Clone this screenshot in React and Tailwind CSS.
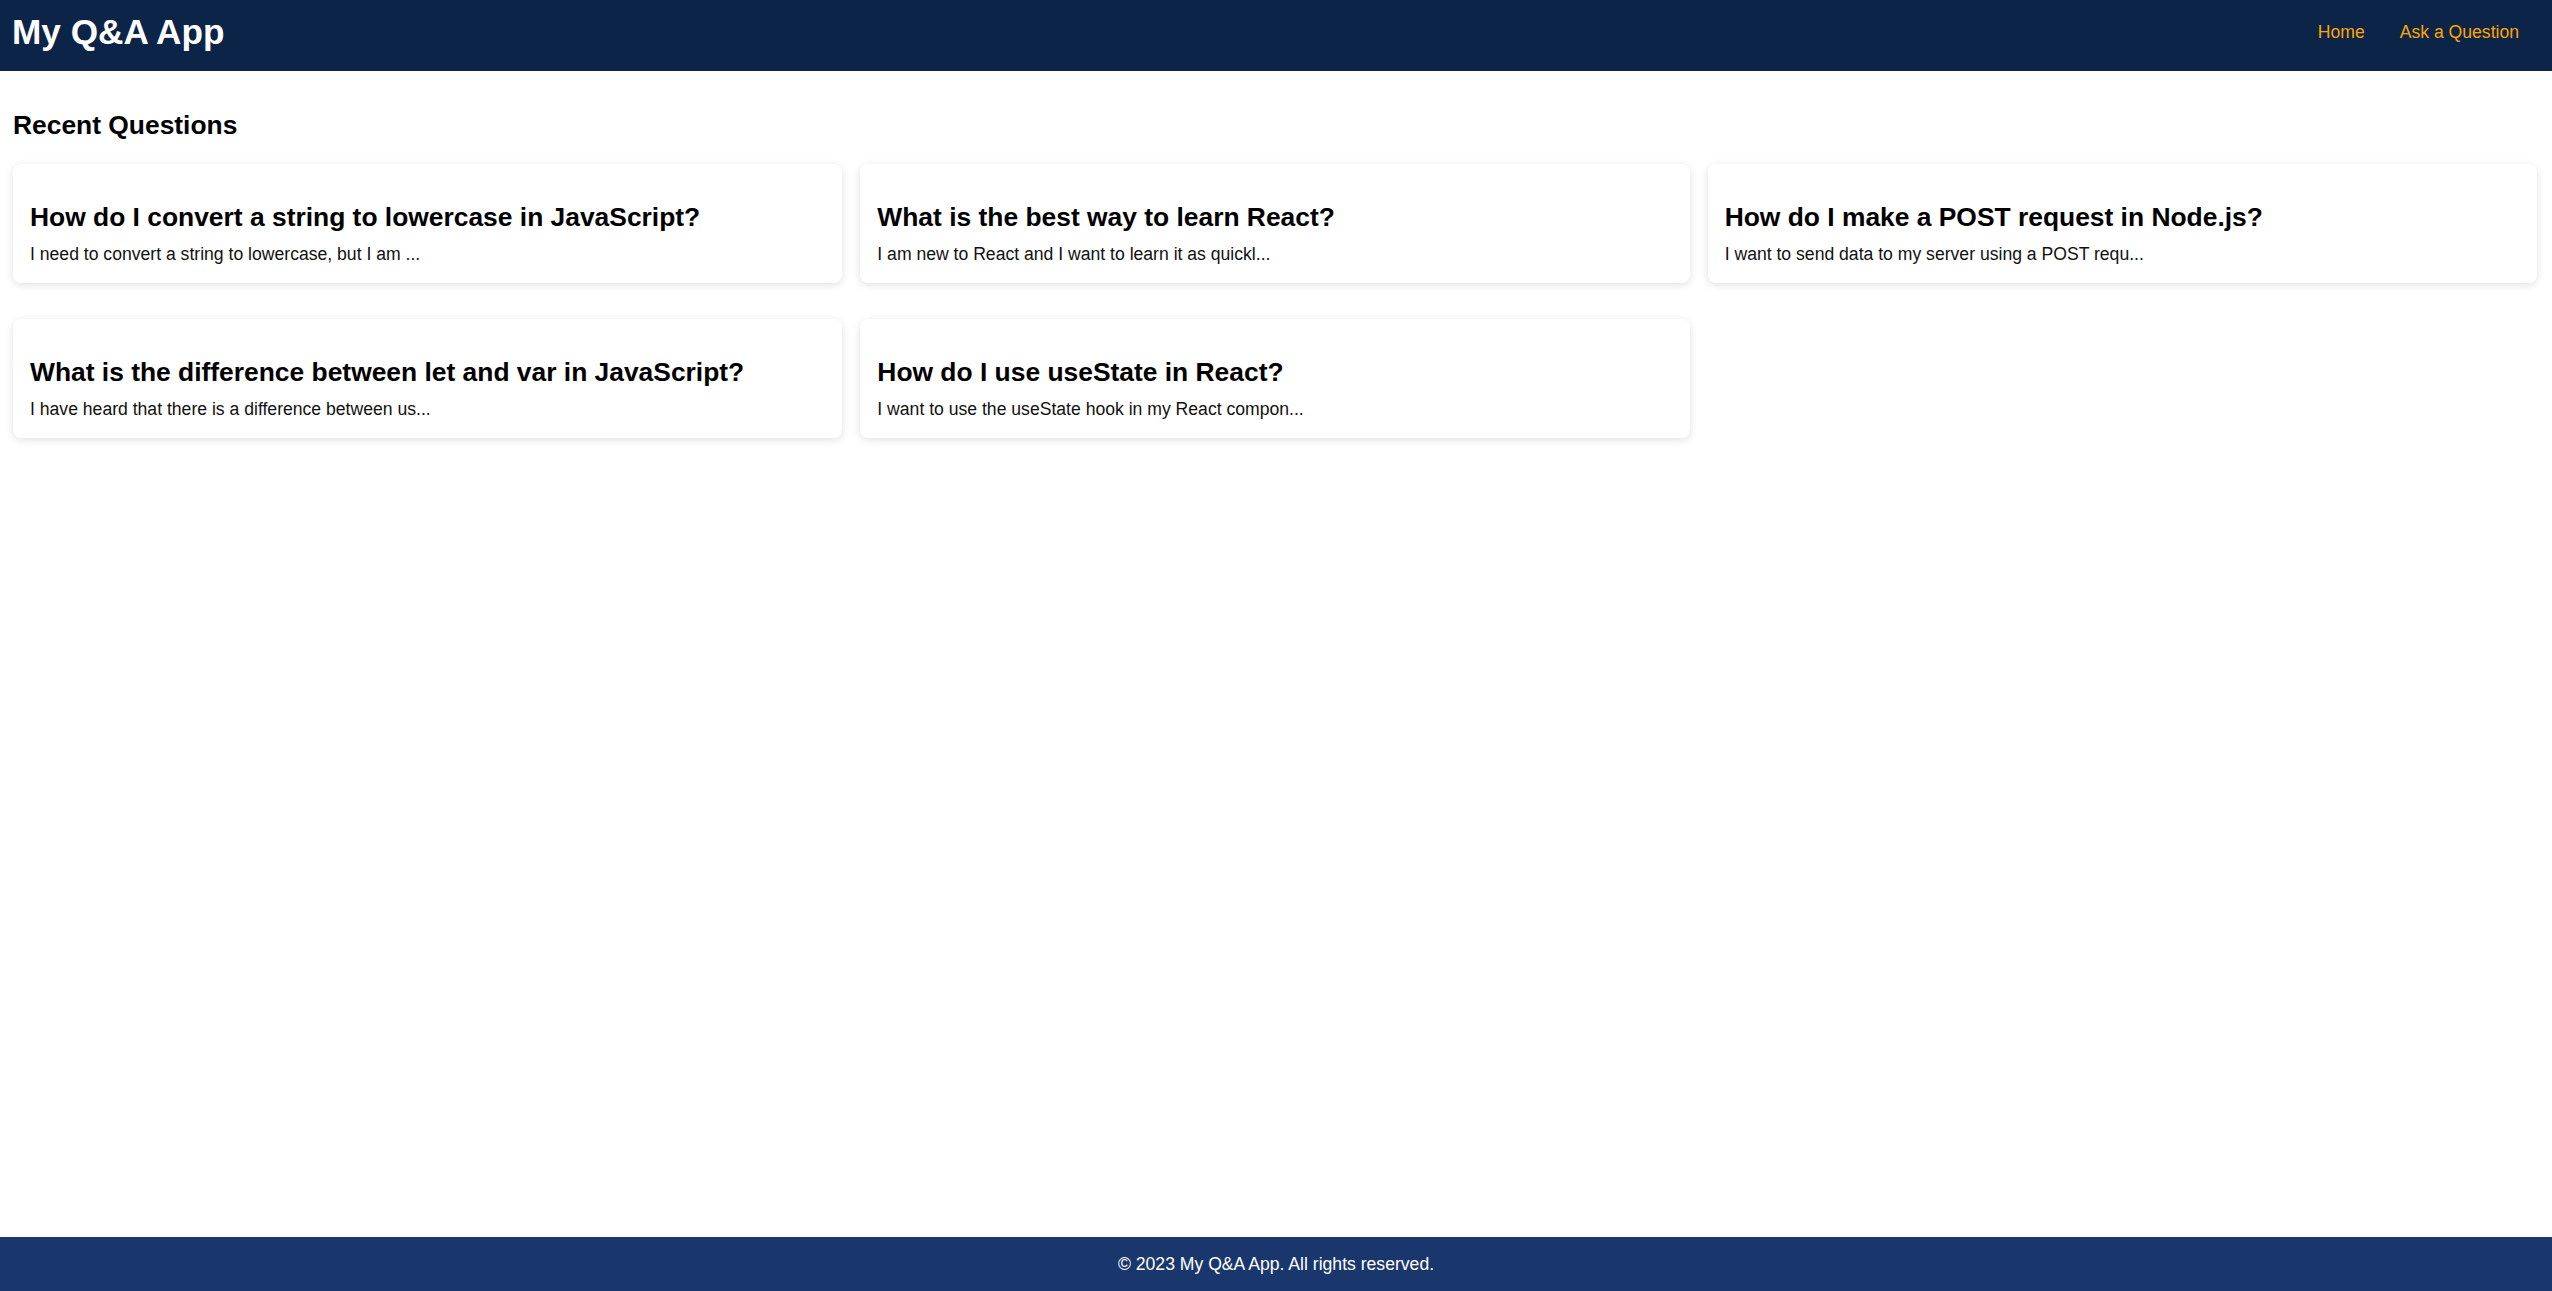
const questions = [
  {
    id: 1,
    title: 'How do I convert a string to lowercase in JavaScript?',
    body: 'I need to convert a string to lowercase, but I am ...',
  },
  {
    id: 2,
    title: 'What is the best way to learn React?',
    body: 'I am new to React and I want to learn it as quickl...',
  },
  {
    id: 3,
    title: 'How do I make a POST request in Node.js?',
    body: 'I want to send data to my server using a POST requ...',
  },
  {
    id: 4,
    title: 'What is the difference between let and var in JavaScript?',
    body: 'I have heard that there is a difference between us...',
  },
  {
    id: 5,
    title: 'How do I use useState in React?',
    body: 'I want to use the useState hook in my React compon...',
  },
];

const QuestionCard = ({ question }) => (
  <div className="bg-white rounded-lg shadow-[0_2px_8px_rgba(0,0,0,0.12)] px-[17px] pt-[38px] pb-[19px]">
    <h3 className="text-[26.4px] leading-[30px] font-bold text-black">{question.title}</h3>
    <p className="mt-[12px] text-[17.6px] leading-[20px] text-[#111]">{question.body}</p>
  </div>
);

export default function App() {
  return (
    <div className="min-h-screen flex flex-col bg-white font-['Liberation_Sans',Arial,sans-serif]">
      {/* Header */}
      <header className="bg-[#0B2447] flex items-center justify-between pl-[12px] pr-[33px] pt-[12px] pb-[19px]">
        <h1 className="text-[35.2px] leading-[40px] font-bold text-white">My Q&amp;A App</h1>
        <nav className="flex items-center gap-[35px]">
          <a href="#" className="text-[17.6px] leading-[20px] text-[#ffa500]">Home</a>
          <a href="#" className="text-[17.6px] leading-[20px] text-[#ffa500]">Ask a Question</a>
        </nav>
      </header>

      {/* Main */}
      <main className="flex-1 pl-[13px] pr-[15px] pt-[39px]">
        <h2 className="text-[26.4px] leading-[30px] font-bold text-black mb-[24px]">Recent Questions</h2>
        <div className="grid grid-cols-3 gap-x-[18px] gap-y-[36px]">
          {questions.map((q) => (
            <QuestionCard key={q.id} question={q} />
          ))}
        </div>
      </main>

      {/* Footer */}
      <footer className="bg-[#19376D] h-[54px] flex items-center justify-center">
        <p className="text-[17.6px] leading-[20px] text-white">© 2023 My Q&amp;A App. All rights reserved.</p>
      </footer>
    </div>
  );
}
